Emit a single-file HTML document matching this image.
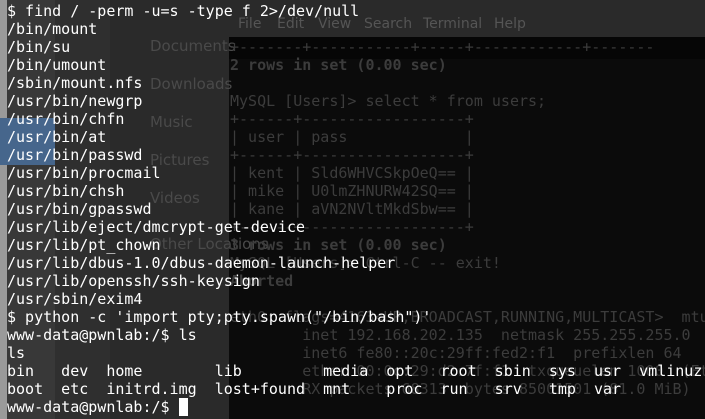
<!DOCTYPE html>
<html><head><meta charset="utf-8"><style>
html,body{margin:0;padding:0;width:705px;height:419px;overflow:hidden;background:#0b0b0b;}
.a{position:absolute;}
pre{margin:0;font-family:"DejaVu Sans Mono","Liberation Mono",monospace;font-size:15px;line-height:18px;position:absolute;white-space:pre;}
.s{font-family:"DejaVu Sans","Liberation Sans",sans-serif;position:absolute;color:#4a4a4a;font-size:15px;}
.m{font-family:"DejaVu Sans","Liberation Sans",sans-serif;position:absolute;color:#555;font-size:14px;top:16px;}
</style></head><body>
<div class="a" style="left:0;top:0;width:7px;height:419px;background:#9a9a9a"></div>
<div class="a" style="left:7px;top:0;width:48px;height:419px;background:#383838"></div>
<div class="a" style="left:0;top:118px;width:55px;height:47px;background:#46668c"></div>
<div class="a" style="left:55px;top:0;width:55px;height:419px;background:#2f2f2f"></div>
<div class="a" style="left:110px;top:0;width:119px;height:419px;background:#2a2a2a"></div>
<div class="a" style="left:229px;top:0;width:476px;height:37px;background:#2a2a2a"></div>
<div class="a" style="left:229px;top:37px;width:476px;height:22px;background:#060606"></div>
<div class="s" style="left:150px;top:37px">Documents</div>
<div class="s" style="left:150px;top:75px">Downloads</div>
<div class="s" style="left:150px;top:113px">Music</div>
<div class="s" style="left:150px;top:151px">Pictures</div>
<div class="s" style="left:150px;top:189px">Videos</div>
<div class="s" style="left:150px;top:235px">Other Locations</div>
<div class="m" style="left:238px">File</div>
<div class="m" style="left:277px">Edit</div>
<div class="m" style="left:318px">View</div>
<div class="m" style="left:364px">Search</div>
<div class="m" style="left:423px">Terminal</div>
<div class="m" style="left:494px">Help</div>
<pre style="left:230px;top:38px;color:#3c3c3c">+-------+-----------+-----+------------+-------
<b>2 rows in set (0.00 sec)</b>

MySQL [Users]> select * from users;
+------+------------------+
| user | pass             |
+------+------------------+
| kent | Sld6WHVCSkpOeQ== |
| mike | U0lmZHNURW42SQ== |
| kane | aVN2NVltMkdSbw== |
+------+------------------+
<b>3 rows in set (0.00 sec)</b>
MySQL [Users]> Ctrl-C -- exit!
<b>Aborted</b>

eth0: flags=4163&lt;UP,BROADCAST,RUNNING,MULTICAST&gt;  mtu
        inet 192.168.202.135  netmask 255.255.255.0
        inet6 fe80::20c:29ff:fed2:f1  prefixlen 64
        ether 00:0c:29:d2:7f:f1  txqueuelen 1000  (Et
        RX packets 68313  bytes 85001501 (81.0 MiB)</pre>
<pre style="left:7px;top:2px;color:#fff">$ find / -perm -u=s -type f 2>/dev/null
/bin/mount
/bin/su
/bin/umount
/sbin/mount.nfs
/usr/bin/newgrp
/usr/bin/chfn
/usr/bin/at
/usr/bin/passwd
/usr/bin/procmail
/usr/bin/chsh
/usr/bin/gpasswd
/usr/lib/eject/dmcrypt-get-device
/usr/lib/pt_chown
/usr/lib/dbus-1.0/dbus-daemon-launch-helper
/usr/lib/openssh/ssh-keysign
/usr/sbin/exim4
$ python -c 'import pty;pty.spawn("/bin/bash")'
www-data@pwnlab:/$ ls
ls
bin   dev  home        lib         media  opt   root  sbin  sys  usr  vmlinuz
boot  etc  initrd.img  lost+found  mnt    proc  run   srv   tmp  var
www-data@pwnlab:/$ <span style="background:#fff"> </span></pre>
</body></html>
